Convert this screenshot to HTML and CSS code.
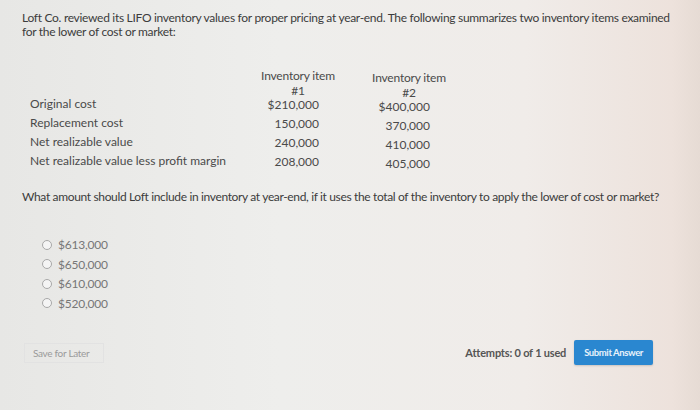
FILE: index.html
```html
<!DOCTYPE html>
<html>
<head>
<meta charset="utf-8">
<link rel="stylesheet" href="styles.css">
</head>
<body>
<div class="page">
  <p class="intro">Loft Co. reviewed its LIFO inventory values for proper pricing at year-end. The following summarizes two inventory items examined for the lower of cost or market:</p>
  <div class="table">
    <div class="labels">
      <div class="lbl">Original cost</div>
      <div class="lbl">Replacement cost</div>
      <div class="lbl">Net realizable value</div>
      <div class="lbl">Net realizable value less profit margin</div>
    </div>
    <div class="col col1">
      <div class="head">Inventory item<br>#1</div>
      <div class="val">$210,000</div>
      <div class="val">150,000</div>
      <div class="val">240,000</div>
      <div class="val">208,000</div>
    </div>
    <div class="col col2">
      <div class="head">Inventory item<br>#2</div>
      <div class="val">$400,000</div>
      <div class="val">370,000</div>
      <div class="val">410,000</div>
      <div class="val">405,000</div>
    </div>
  </div>
  <p class="question">What amount should Loft include in inventory at year-end, if it uses the total of the inventory to apply the lower of cost or market?</p>
  <div class="options">
    <label class="opt"><span class="radio"></span>$613,000</label>
    <label class="opt"><span class="radio"></span>$650,000</label>
    <label class="opt"><span class="radio"></span>$610,000</label>
    <label class="opt"><span class="radio"></span>$520,000</label>
  </div>
  <div class="footer">
    <div class="save">Save for Later</div>
    <div class="right">
      <span class="attempts">Attempts: 0 of 1 used</span>
      <div class="submit">Submit Answer</div>
    </div>
  </div>
</div>
</body>
</html>
```
FILE: styles.css
```css
html, body {
  margin: 0;
  padding: 0;
  width: 700px;
  height: 410px;
  overflow: hidden;
}
body {
  background: linear-gradient(90deg, #e7e7e5 0%, #eeeeec 40%, #f0ece9 75%, #ede2dc 96%, #e6dbd4 100%);
  font-family: Lato, "Open Sans", sans-serif;
  color: #3c3c3c;
}
.page {
  padding: 11px 0 0 22px;
  width: 670px;
}
.intro {
  margin: 0;
  font-size: 12px;
  line-height: 14px;
  letter-spacing: -0.3px;
  width: 652px;
}
.table {
  display: flex;
  margin-top: 29px;
  font-size: 12px;
  color: #4a4a4a;
}
.labels {
  width: 228px;
  padding-left: 8px;
  padding-top: 26px;
}
.lbl, .val {
  height: 19px;
  line-height: 19px;
}
.col {
  display: flex;
  flex-direction: column;
}
.head {
  text-align: center;
  line-height: 15px;
  height: 27px;
  letter-spacing: -0.2px;
}
.val {
  text-align: right;
  padding-right: 19px;
}
.col1 { width: 80px; }
.col2 { width: 80px; margin-left: 31px; padding-top: 2px; }
.question {
  margin: 17px 0 0 0;
  font-size: 12px;
  line-height: 14px;
  letter-spacing: -0.35px;
  width: 670px;
}
.options {
  margin-top: 31px;
  padding-left: 20px;
  display: flex;
  flex-direction: column;
}
.opt {
  display: flex;
  align-items: center;
  height: 19.5px;
  font-size: 12px;
  color: #777;
  letter-spacing: -0.2px;
}
.radio {
  width: 8px;
  height: 8px;
  border: 1px solid #a8a8a8;
  border-radius: 50%;
  background: #f4f4f4;
  margin-right: 6px;
}
.footer {
  margin-top: 27px;
  display: flex;
  align-items: center;
  justify-content: space-between;
  width: 629px;
  padding-left: 2px;
}
.save {
  border: 1px solid #e2e2e2;
  padding: 3px 14px 3px 8px;
  font-size: 10px;
  color: #9a9a9a;
  letter-spacing: -0.3px;
}
.right {
  display: flex;
  align-items: center;
  gap: 8px;
}
.attempts {
  font-size: 11px;
  font-weight: bold;
  color: #555;
  letter-spacing: -0.2px;
}
.submit {
  background: #2a87d0;
  color: #e8f2fb;
  font-size: 9.5px;
  font-weight: bold;
  letter-spacing: -0.4px;
  padding: 0 10px;
  height: 25px;
  line-height: 25px;
  border-radius: 2px;
  box-shadow: 0 1px 2px rgba(0,0,0,0.15);
}
```
